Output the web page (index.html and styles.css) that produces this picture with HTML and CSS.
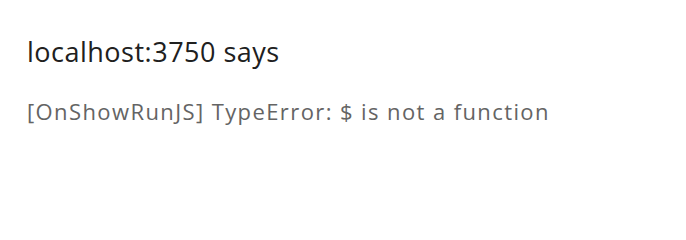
FILE: index.html
```html
<!DOCTYPE html>
<html>
<head>
<meta charset="utf-8">
<link rel="stylesheet" href="styles.css">
</head>
<body>
<div class="dialog">
  <div class="title">localhost:3750 says</div>
  <div class="message">[OnShowRunJS] TypeError: $ is not a function</div>
</div>
</body>
</html>
```
FILE: styles.css
```css
html, body {
  margin: 0;
  background: #ffffff;
}
.dialog {
  padding: 34px 0 0 27px;
  font-family: "Open Sans", "Noto Sans", sans-serif;
}
.title {
  font-size: 27px;
  line-height: 36px;
  color: #202020;
  letter-spacing: 0.5px;
}
.message {
  margin-top: 26px;
  font-size: 22px;
  line-height: 30px;
  color: #646464;
  letter-spacing: 1.4px;
}
```
